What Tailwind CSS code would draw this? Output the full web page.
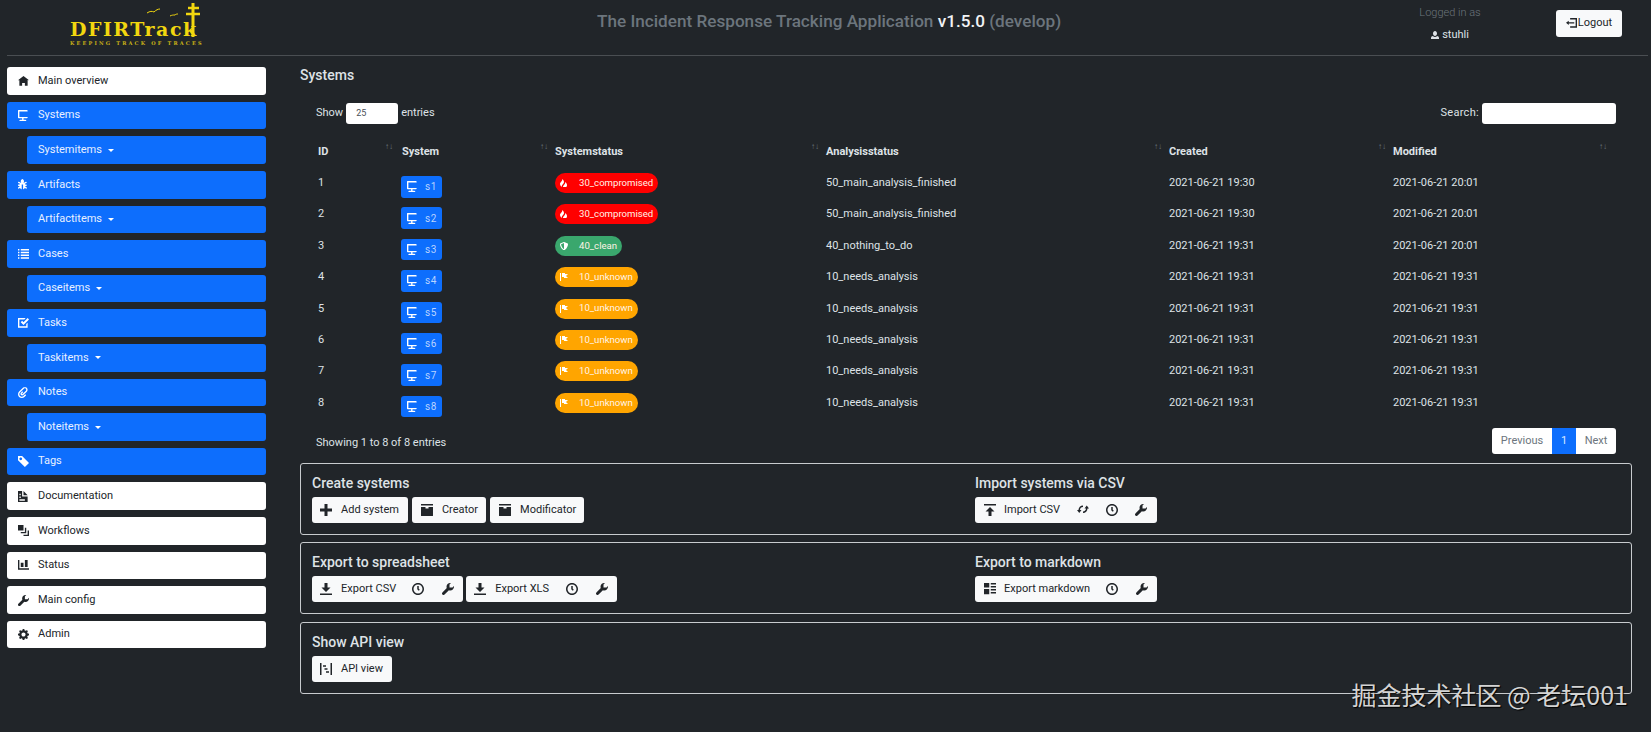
<!DOCTYPE html>
<html lang="en">
<head>
<meta charset="UTF-8">
<title>DFIRTrack</title>
<script src="https://cdn.jsdelivr.net/npm/@tailwindcss/browser@4"></script>
</head>
<body class="relative h-screen overflow-hidden bg-[#212529] text-[#dee2e6] text-[11px] font-['Roboto',sans-serif]">

<!-- icons (8x8 grid) -->
<svg class="hidden">
  <symbol id="home" viewBox="0 0 8 8"><path d="M4 0l-4 3h1v4h2v-2h2v2h2v-4.03l1 .03-4-3z"/></symbol>
  <symbol id="monitor" viewBox="0 0 8 8"><path d="M.34 0a.5.5 0 0 0-.34.5v5a.5.5 0 0 0 .5.5h2.5v1h-1c-.55 0-1 .22-1 .5v.5h5v-.5c0-.28-.45-.5-1-.5h-1v-1h2.5a.5.5 0 0 0 .5-.5v-5a.5.5 0 0 0-.5-.5h-7a.5.5 0 0 0-.09 0 .5.5 0 0 0-.06 0zm.66 1h6v4h-6v-4z"/></symbol>
  <symbol id="bug" viewBox="0 0 8 8"><path d="M3.5 0c-1.19 0-1.98 1.69-1.19 2.5-.09.07-.2.14-.28.22l-1.31-.66a.5.5 0 0 0-.34-.06.5.5 0 0 0-.09.94l1.16.56c-.09.16-.19.33-.25.5h-.69a.5.5 0 0 0-.09 0 .5.5 0 1 0 .09 1h.5c0 .23.02.45.06.66l-.78.41a.5.5 0 1 0 .44.88l.66-.34c.21.28.46.52.75.66.18.08.37.16.56.19v-3.41h1v3.41c.19-.03.38-.1.56-.19.29-.14.54-.38.75-.66l.66.34a.5.5 0 1 0 .44-.88l-.78-.41c.04-.21.06-.43.06-.66h.5a.5.5 0 1 0 0-1h-.69c-.06-.17-.16-.34-.25-.5l1.16-.56a.5.5 0 0 0-.31-.94.5.5 0 0 0-.13.06l-1.31.66c-.09-.08-.19-.15-.28-.22.78-.83 0-2.5-1.19-2.5z"/></symbol>
  <symbol id="list" viewBox="0 0 8 8"><path d="M0 0h1v1h-1zM2 0h6v1h-6zM0 2h1v1h-1zM2 2h6v1h-6zM0 4h1v1h-1zM2 4h6v1h-6zM0 6h1v1h-1zM2 6h6v1h-6z"/></symbol>
  <symbol id="task" viewBox="0 0 8 8"><path d="M0 0v7h7v-3.59l-1 1v1.59h-5v-5h3.59l1-1h-5.59zm7 0l-3 3-1-1-1 1 2 2 4-4-1-1z"/></symbol>
  <symbol id="clip" viewBox="0 0 8 8"><path d="M5 0c-.51 0-1.02.21-1.41.59l-2.78 2.72c-1.07 1.07-1.07 2.8 0 3.88 1.07 1.07 2.8 1.07 3.88 0l1.25-1.25-.69-.69-1.16 1.13-.09.13c-.69.69-1.81.69-2.5 0-.68-.68-.66-1.78 0-2.47l2.78-2.75c.39-.39 1.04-.39 1.44 0 .39.39.37 1.01 0 1.41l-2.5 2.47c-.1.1-.27.1-.38 0-.1-.1-.1-.27 0-.38l.06-.03.91-.94-.69-.69-.97.97c-.48.48-.48 1.27 0 1.75s1.27.48 1.75 0l2.5-2.44c.78-.78.78-2.04 0-2.81-.39-.39-.89-.59-1.41-.59z"/></symbol>
  <symbol id="tag" viewBox="0 0 8 8"><path d="M0 0v3l5 5 3-3-5-5h-3zm2 1c.55 0 1 .45 1 1s-.45 1-1 1-1-.45-1-1 .45-1 1-1z"/></symbol>
  <symbol id="doc" viewBox="0 0 8 8"><path d="M0 0v8h7v-4h-4v-4h-3zm4 0v3h3l-3-3zm-3 2h1v1h-1v-1zm0 2h1v1h-1v-1zm0 2h4v1h-4v-1z"/></symbol>
  <symbol id="layers" viewBox="0 0 8 8"><path d="M0 0v4h4v-4h-4zm5 2v3h-3v1h4v-4h-1zm2 2v3h-3v1h4v-4h-1z"/></symbol>
  <symbol id="chart" viewBox="0 0 8 8"><path d="M0 0v7h8v-1h-7v-6h-1zm5 0v5h2v-5h-2zm-3 2v3h2v-3h-2z"/></symbol>
  <symbol id="wrench" viewBox="0 0 8 8"><path d="M5.5 0c-1.38 0-2.5 1.12-2.5 2.5 0 .32.08.62.19.91l-2.91 2.88c-.39.39-.39 1.05 0 1.44.2.2.46.28.72.28.26 0 .52-.09.72-.28l2.88-2.91c.28.11.58.19.91.19 1.38 0 2.5-1.12 2.5-2.5 0-.16 0-.32-.03-.47l-.97.97h-2v-2l.97-.97c-.15-.03-.31-.03-.47-.03z"/></symbol>
  <symbol id="cog" viewBox="0 0 8 8"><path d="M3.5 0l-.5 1.19c-.1.03-.19.08-.28.13l-1.19-.5-.72.72.5 1.19c-.05.1-.09.18-.13.28l-1.19.5v1l1.19.5c.04.1.08.18.13.28l-.5 1.19.72.72 1.19-.5c.09.04.18.09.28.13l.5 1.19h1l.5-1.19c.09-.04.19-.08.28-.13l1.19.5.72-.72-.5-1.19c.04-.09.09-.19.13-.28l1.19-.5v-1l-1.19-.5c-.03-.09-.08-.19-.13-.28l.5-1.19-.72-.72-1.19.5c-.09-.04-.19-.09-.28-.13l-.5-1.19h-1zm.5 2.5c.83 0 1.5.67 1.5 1.5s-.67 1.5-1.5 1.5-1.5-.67-1.5-1.5.67-1.5 1.5-1.5z"/></symbol>
  <symbol id="clock" viewBox="0 0 8 8"><path d="M4 0c-2.2 0-4 1.8-4 4s1.8 4 4 4 4-1.8 4-4-1.8-4-4-4zm0 1c1.66 0 3 1.34 3 3s-1.34 3-3 3-3-1.34-3-3 1.34-3 3-3zm-.5 1v2.22l.16.13.5.5.34.38.72-.72-.38-.34-.34-.34v-1.81h-1z"/></symbol>
  <symbol id="plus" viewBox="0 0 8 8"><path d="M3 0v3h-3v2h3v3h2v-3h3v-2h-3v-3h-2z"/></symbol>
  <symbol id="box" viewBox="0 0 8 8"><path d="M0 0v1h8v-1h-8zm0 2v5.91c0 .05.04.09.09.09h7.81c.05 0 .09-.04.09-.09v-5.91h-2.97v1.03h-2.03v-1.03h-3z"/></symbol>
  <symbol id="download" viewBox="0 0 8 8"><path d="M3 0v3h-2l3 3 3-3h-2v-3h-2zm-3 7v1h8v-1h-8z"/></symbol>
  <symbol id="upload" viewBox="0 0 8 8"><path d="M0 0v1h8v-1h-8zm4 2l-3 3h2v3h2v-3h2l-3-3z"/></symbol>
  <symbol id="loop" viewBox="0 0 8 8"><path d="M4 1c-1.65 0-3 1.35-3 3h-1l1.5 2 1.5-2h-1c0-1.11.89-2 2-2v-1zm2.5 0l-1.5 2h1c0 1.11-.89 2-2 2v1c1.65 0 3-1.35 3-3h1l-1.5-2z"/></symbol>
  <symbol id="sheet" viewBox="0 0 8 8"><path d="M0 0h3.5v3h-3.5zM0 4h3.5v3.5h-3.5zM4.5 0h3.5v1h-3.5zM4.5 2h3.5v1h-3.5zM4.5 4h3.5v1h-3.5zM4.5 6h3.5v1h-3.5z"/></symbol>
  <symbol id="project" viewBox="0 0 8 8"><path d="M0 0v8h1v-8h-1zm7 0v8h1v-8h-1zm-5 1.5v1h2v-1h-2zm1 2v1h2v-1h-2zm1 2v1h2v-1h-2z"/></symbol>
  <symbol id="person" viewBox="0 0 8 8"><path d="M4 0c-1.1 0-2 1.12-2 2.5s.9 2.5 2 2.5 2-1.12 2-2.5-.9-2.5-2-2.5zm-2.09 5c-1.06.05-1.91.92-1.91 2v1h8v-1c0-1.08-.84-1.95-1.91-2-.54.61-1.28 1-2.09 1-.81 0-1.55-.39-2.09-1z"/></symbol>
  <symbol id="logout" viewBox="0 0 8 8"><path d="M3 0v1h4v5h-4v1h5v-7h-5zm-1 2l-2 1.5 2 1.5v-1h4v-1h-4v-1z"/></symbol>
  <symbol id="fire" viewBox="0 0 8 8"><path d="M2 0c1 2-2 3-2 5s2 3 2 3c-.98-1.98 2-3 2-5s-2-3-2-3zm3 3c1 2-2 3-2 5h3c.4 0 1-.5 1-2 0-2-2-3-2-3z"/></symbol>
  <symbol id="shield" viewBox="0 0 8 8"><path d="M4 0l-.19.09-3.5 1.47-.31.13v.31c0 1.66.67 3.12 1.47 4.19.4.53.83.97 1.25 1.28.42.31.83.53 1.28.53.46 0 .86-.22 1.28-.53.42-.31.85-.75 1.25-1.28.8-1.07 1.47-2.53 1.47-4.19v-.31l-.31-.13-3.5-1.47-.19-.09zm0 1.09v5.91c-.04 0-.33-.07-.66-.31s-.71-.63-1.06-1.09c-.64-.85-1.14-2.03-1.22-3.28l2.94-1.22z"/></symbol>
  <symbol id="flag" viewBox="0 0 8 8"><path d="M0 0v8h1v-8h-1zm2 0v4h2v1h4l-2-1.97 2-2.03h-3v-1h-3z"/></symbol>
</svg>

<!-- Header -->
<header class="flex h-[55px] text-[#6c757d]">
  <div class="relative ml-[70px] w-[135px] pt-[19px] text-[#f2d70f]">
    <div class="font-['DejaVu_Serif',serif] font-bold text-[19px] leading-[20px] tracking-[1.5px] whitespace-nowrap">DFIRTrack</div>
    <div class="font-['DejaVu_Serif',serif] font-bold text-[5px] leading-[6px] mt-[1px] tracking-[2.2px] whitespace-nowrap text-[#c9b216]">KEEPING TRACK OF TRACES</div>
    <svg class="absolute left-[76px] top-[2px] w-[58px] h-[36px]" viewBox="0 0 58 36" fill="none" stroke="#f2d70f">
      <path d="M47 1v34" stroke-width="3"/>
      <path d="M42 6h11M40 12h14" stroke-width="2.5"/>
      <path d="M1 11c3-2 5-2 7-1 2-2 4-3 6-3M24 14c2-1 3-1 5-1 1-1 2-1 3-1" stroke-width="1"/>
    </svg>
  </div>
  <div class="ml-[392px] pt-[11px] text-[17.15px] leading-[21px] font-medium whitespace-nowrap">
    The Incident Response Tracking Application <span class="text-[#f1f3f5]">v1.5.0</span> (develop)
  </div>
  <div class="ml-auto mr-[29px] flex">
    <div class="w-[64px] mr-[74px] text-center pt-[6px]">
      <div class="leading-[14px] font-light whitespace-nowrap">Logged in as</div>
      <div class="mt-[8px] flex justify-center items-center gap-[3px] text-[#dee2e6] leading-[14px]">
        <svg class="w-[8px] h-[8px] fill-current"><use href="#person"/></svg>stuhli
      </div>
    </div>
    <button class="mt-[10px] h-[27px] w-[66px] rounded-[3px] bg-[#f8f9fa] text-[#212529] flex items-center justify-center gap-[1px]">
      <svg class="w-[11px] h-[11px] fill-current"><use href="#logout"/></svg>Logout
    </button>
  </div>
</header>
<div class="ml-[7px] mr-[3px] h-px bg-[#4a4e52]"></div>

<div class="flex">
  <!-- Sidebar -->
  <nav class="ml-[7px] w-[259px] pt-[11.3px] flex flex-col gap-[7px]">
    <a class="h-[27.6px] px-[11px] flex items-center gap-[9px] rounded-[3px] bg-white text-[#212529]"><svg class="w-[11px] h-[11px] fill-current"><use href="#home"/></svg>Main overview</a>
    <a class="h-[27.6px] px-[11px] flex items-center gap-[9px] rounded-[3px] bg-[#0d6efd] text-[#e8f0ff]"><svg class="w-[11px] h-[11px] fill-white"><use href="#monitor"/></svg>Systems</a>
    <a class="h-[27.6px] ml-[20px] px-[11px] flex items-center gap-[6px] rounded-[3px] bg-[#0d6efd] text-[#e8f0ff]">Systemitems<i class="border-x-[3px] border-t-[3px] border-x-transparent border-t-white"></i></a>
    <a class="h-[27.6px] px-[11px] flex items-center gap-[9px] rounded-[3px] bg-[#0d6efd] text-[#e8f0ff]"><svg class="w-[11px] h-[11px] fill-white"><use href="#bug"/></svg>Artifacts</a>
    <a class="h-[27.6px] ml-[20px] px-[11px] flex items-center gap-[6px] rounded-[3px] bg-[#0d6efd] text-[#e8f0ff]">Artifactitems<i class="border-x-[3px] border-t-[3px] border-x-transparent border-t-white"></i></a>
    <a class="h-[27.6px] px-[11px] flex items-center gap-[9px] rounded-[3px] bg-[#0d6efd] text-[#e8f0ff]"><svg class="w-[11px] h-[11px] fill-white"><use href="#list"/></svg>Cases</a>
    <a class="h-[27.6px] ml-[20px] px-[11px] flex items-center gap-[6px] rounded-[3px] bg-[#0d6efd] text-[#e8f0ff]">Caseitems<i class="border-x-[3px] border-t-[3px] border-x-transparent border-t-white"></i></a>
    <a class="h-[27.6px] px-[11px] flex items-center gap-[9px] rounded-[3px] bg-[#0d6efd] text-[#e8f0ff]"><svg class="w-[11px] h-[11px] fill-white"><use href="#task"/></svg>Tasks</a>
    <a class="h-[27.6px] ml-[20px] px-[11px] flex items-center gap-[6px] rounded-[3px] bg-[#0d6efd] text-[#e8f0ff]">Taskitems<i class="border-x-[3px] border-t-[3px] border-x-transparent border-t-white"></i></a>
    <a class="h-[27.6px] px-[11px] flex items-center gap-[9px] rounded-[3px] bg-[#0d6efd] text-[#e8f0ff]"><svg class="w-[11px] h-[11px] fill-white"><use href="#clip"/></svg>Notes</a>
    <a class="h-[27.6px] ml-[20px] px-[11px] flex items-center gap-[6px] rounded-[3px] bg-[#0d6efd] text-[#e8f0ff]">Noteitems<i class="border-x-[3px] border-t-[3px] border-x-transparent border-t-white"></i></a>
    <a class="h-[27.6px] px-[11px] flex items-center gap-[9px] rounded-[3px] bg-[#0d6efd] text-[#e8f0ff]"><svg class="w-[11px] h-[11px] fill-white"><use href="#tag"/></svg>Tags</a>
    <a class="h-[27.6px] px-[11px] flex items-center gap-[9px] rounded-[3px] bg-white text-[#212529]"><svg class="w-[11px] h-[11px] fill-current"><use href="#doc"/></svg>Documentation</a>
    <a class="h-[27.6px] px-[11px] flex items-center gap-[9px] rounded-[3px] bg-white text-[#212529]"><svg class="w-[11px] h-[11px] fill-current"><use href="#layers"/></svg>Workflows</a>
    <a class="h-[27.6px] px-[11px] flex items-center gap-[9px] rounded-[3px] bg-white text-[#212529]"><svg class="w-[11px] h-[11px] fill-current"><use href="#chart"/></svg>Status</a>
    <a class="h-[27.6px] px-[11px] flex items-center gap-[9px] rounded-[3px] bg-white text-[#212529]"><svg class="w-[11px] h-[11px] fill-current"><use href="#wrench"/></svg>Main config</a>
    <a class="h-[27.6px] px-[11px] flex items-center gap-[9px] rounded-[3px] bg-white text-[#212529]"><svg class="w-[11px] h-[11px] fill-current"><use href="#cog"/></svg>Admin</a>
  </nav>

  <!-- Main -->
  <main class="ml-[34px] w-[1332px]">
    <h2 class="pt-[11px] text-[14px] leading-[16px] font-medium">Systems</h2>

    <div class="mt-[20px] px-[16px] flex items-center h-[21px]">
      <span>Show</span>
      <div class="ml-[3px] w-[52px] h-[21px] rounded-[3px] bg-white text-[#495057] text-[9px] flex items-center pl-[10px]">25</div>
      <span class="ml-[3px]">entries</span>
      <span class="ml-auto tracking-[.3px]">Search:</span>
      <div class="ml-[3px] w-[134px] h-[21px] rounded-[3px] bg-white"></div>
    </div>

    <table class="mt-[8px] ml-[16px] w-[1296px] table-fixed border-collapse">
      <thead>
        <tr class="h-[38px] text-left font-bold">
          <th class="relative w-[84px] pl-[2px] pt-[2px] font-bold"><span>ID</span><span class="absolute right-[7px] top-[9px] text-[8px] text-[#6c757d]">↑↓</span></th>
          <th class="relative w-[153px] pl-[2px] pt-[2px] font-bold"><span>System</span><span class="absolute right-[5px] top-[9px] text-[8px] text-[#6c757d]">↑↓</span></th>
          <th class="relative w-[271px] pl-[2px] pt-[2px] font-bold"><span>Systemstatus</span><span class="absolute right-[5px] top-[9px] text-[8px] text-[#6c757d]">↑↓</span></th>
          <th class="relative w-[343px] pl-[2px] pt-[2px] font-bold"><span>Analysisstatus</span><span class="absolute right-[5px] top-[9px] text-[8px] text-[#6c757d]">↑↓</span></th>
          <th class="relative w-[224px] pl-[2px] pt-[2px] font-bold"><span>Created</span><span class="absolute right-[5px] top-[9px] text-[8px] text-[#6c757d]">↑↓</span></th>
          <th class="relative w-[221px] pl-[2px] pt-[2px] font-bold"><span>Modified</span><span class="absolute right-[5px] top-[9px] text-[8px] text-[#6c757d]">↑↓</span></th>
        </tr>
      </thead>
      <tbody id="rows"></tbody>
    </table>

    <div class="mt-[7px] px-[16px] flex items-center h-[26px]">
      <span class="mt-[5px]">Showing 1 to 8 of 8 entries</span>
      <div class="ml-auto flex h-[26px] rounded-[3px] overflow-hidden bg-white text-[#6c757d]">
        <span class="w-[60px] flex items-center justify-center">Previous</span>
        <span class="w-[24px] flex items-center justify-center bg-[#0d6efd] text-[#dbe8ff]">1</span>
        <span class="w-[40px] flex items-center justify-center">Next</span>
      </div>
    </div>

    <section class="mt-[9px] h-[72px] grid grid-cols-[663px_1fr] px-[11px] pt-[11px] border border-[#c8cbce] rounded-[3px]">
      <div>
        <h3 class="text-[14px] leading-[17px] font-medium">Create systems</h3>
        <div class="mt-[5px] flex gap-[4px]">
          <button class="h-[26px] pl-[8px] pr-[9px] flex items-center gap-[9px] rounded-[3px] bg-[#f8f9fa] text-[#212529]"><svg class="w-[12px] h-[12px] fill-current"><use href="#plus"/></svg>Add system</button>
          <button class="h-[26px] pl-[9px] pr-[8px] flex items-center gap-[9px] rounded-[3px] bg-[#f8f9fa] text-[#212529]"><svg class="w-[12px] h-[12px] fill-current"><use href="#box"/></svg>Creator</button>
          <button class="h-[26px] pl-[9px] pr-[8px] flex items-center gap-[9px] rounded-[3px] bg-[#f8f9fa] text-[#212529]"><svg class="w-[12px] h-[12px] fill-current"><use href="#box"/></svg>Modificator</button>
        </div>
      </div>
      <div>
        <h3 class="text-[14px] leading-[17px] font-medium">Import systems via CSV</h3>
        <div class="mt-[5px] flex">
          <button class="h-[26px] pl-[9px] pr-[10px] flex items-center gap-[8px] rounded-[3px] bg-[#f8f9fa] text-[#212529]"><svg class="w-[12px] h-[12px] fill-current"><use href="#upload"/></svg>Import CSV<svg class="ml-[9px] w-[12px] h-[12px] fill-current"><use href="#loop"/></svg><svg class="ml-[9px] w-[12px] h-[12px] fill-current"><use href="#clock"/></svg><svg class="ml-[9px] w-[12px] h-[12px] fill-current"><use href="#wrench"/></svg></button>
        </div>
      </div>
    </section>

    <section class="mt-[7px] h-[72px] grid grid-cols-[663px_1fr] px-[11px] pt-[11px] border border-[#c8cbce] rounded-[3px]">
      <div>
        <h3 class="text-[14px] leading-[17px] font-medium">Export to spreadsheet</h3>
        <div class="mt-[5px] flex gap-[3px]">
          <button class="h-[26px] pl-[8px] pr-[9px] flex items-center gap-[9px] rounded-[3px] bg-[#f8f9fa] text-[#212529]"><svg class="w-[12px] h-[12px] fill-current"><use href="#download"/></svg>Export CSV<svg class="ml-[7px] w-[12px] h-[12px] fill-current"><use href="#clock"/></svg><svg class="ml-[9px] w-[12px] h-[12px] fill-current"><use href="#wrench"/></svg></button>
          <button class="h-[26px] pl-[8px] pr-[9px] flex items-center gap-[9px] rounded-[3px] bg-[#f8f9fa] text-[#212529]"><svg class="w-[12px] h-[12px] fill-current"><use href="#download"/></svg>Export XLS<svg class="ml-[8px] w-[12px] h-[12px] fill-current"><use href="#clock"/></svg><svg class="ml-[9px] w-[12px] h-[12px] fill-current"><use href="#wrench"/></svg></button>
        </div>
      </div>
      <div>
        <h3 class="text-[14px] leading-[17px] font-medium">Export to markdown</h3>
        <div class="mt-[5px] flex">
          <button class="h-[26px] pl-[9px] pr-[9px] flex items-center gap-[8px] rounded-[3px] bg-[#f8f9fa] text-[#212529]"><svg class="w-[12px] h-[12px] fill-current"><use href="#sheet"/></svg>Export markdown<svg class="ml-[8px] w-[12px] h-[12px] fill-current"><use href="#clock"/></svg><svg class="ml-[10px] w-[12px] h-[12px] fill-current"><use href="#wrench"/></svg></button>
        </div>
      </div>
    </section>

    <section class="mt-[8px] h-[72px] px-[11px] pt-[11px] border border-[#c8cbce] rounded-[3px]">
      <h3 class="text-[14px] leading-[17px] font-medium">Show API view</h3>
      <div class="mt-[5px] flex">
        <button class="h-[26px] pl-[8px] pr-[9px] flex items-center gap-[9px] rounded-[3px] bg-[#f8f9fa] text-[#212529]"><svg class="w-[12px] h-[12px] fill-current"><use href="#project"/></svg>API view</button>
      </div>
    </section>
  </main>
</div>

<!-- watermark over the page -->
<div class="absolute right-[23px] top-[680px] text-[25px] leading-[28px] text-[#d4d4d4] whitespace-nowrap font-['Noto_Sans_CJK_SC','Liberation_Sans',sans-serif] [text-shadow:1px_1px_1px_#000]">掘金技术社区 @ 老坛001</div>

<script>
  // Sample data
  const badgeStyles = {
    '30_compromised': { color: 'bg-[#ff0000]', icon: 'fire' },
    '40_clean': { color: 'bg-[#3aa76d]', icon: 'shield' },
    '10_unknown': { color: 'bg-[#ffa500]', icon: 'flag' }
  };
  const systems = [
    [1, '30_compromised', '50_main_analysis_finished', '2021-06-21 19:30', '2021-06-21 20:01'],
    [2, '30_compromised', '50_main_analysis_finished', '2021-06-21 19:30', '2021-06-21 20:01'],
    [3, '40_clean', '40_nothing_to_do', '2021-06-21 19:31', '2021-06-21 20:01'],
    [4, '10_unknown', '10_needs_analysis', '2021-06-21 19:31', '2021-06-21 19:31'],
    [5, '10_unknown', '10_needs_analysis', '2021-06-21 19:31', '2021-06-21 19:31'],
    [6, '10_unknown', '10_needs_analysis', '2021-06-21 19:31', '2021-06-21 19:31'],
    [7, '10_unknown', '10_needs_analysis', '2021-06-21 19:31', '2021-06-21 19:31'],
    [8, '10_unknown', '10_needs_analysis', '2021-06-21 19:31', '2021-06-21 19:31']
  ];

  document.getElementById('rows').innerHTML = systems.map(([id, status, analysis, created, modified]) => {
    const badge = badgeStyles[status];
    return `
      <tr class="h-[31.4px] align-top">
        <td class="pl-[2px] pt-[5px] leading-[16px]">${id}</td>
        <td class="pl-[1px] pt-[6px]">
          <span class="inline-flex items-center gap-[7px] h-[21.5px] w-[41px] pl-[6px] rounded-[3px] bg-[#0d6efd] text-[#b9d3ff] text-[10px] tracking-[.5px]">
            <svg class="w-[11px] h-[11px] fill-white"><use href="#monitor"/></svg>s${id}
          </span>
        </td>
        <td class="pl-[2px] pt-[3px]">
          <span class="inline-flex items-center h-[20px] pl-[5px] pr-[5px] gap-[11px] rounded-full ${badge.color} text-[#fff3e6] text-[9.6px]">
            <svg class="w-[8px] h-[8px] fill-white"><use href="#${badge.icon}"/></svg>${status}
          </span>
        </td>
        <td class="pl-[2px] pt-[5px] leading-[16px]">${analysis}</td>
        <td class="pl-[2px] pt-[5px] leading-[16px]">${created}</td>
        <td class="pl-[2px] pt-[5px] leading-[16px]">${modified}</td>
      </tr>`;
  }).join('');
</script>
</body>
</html>
